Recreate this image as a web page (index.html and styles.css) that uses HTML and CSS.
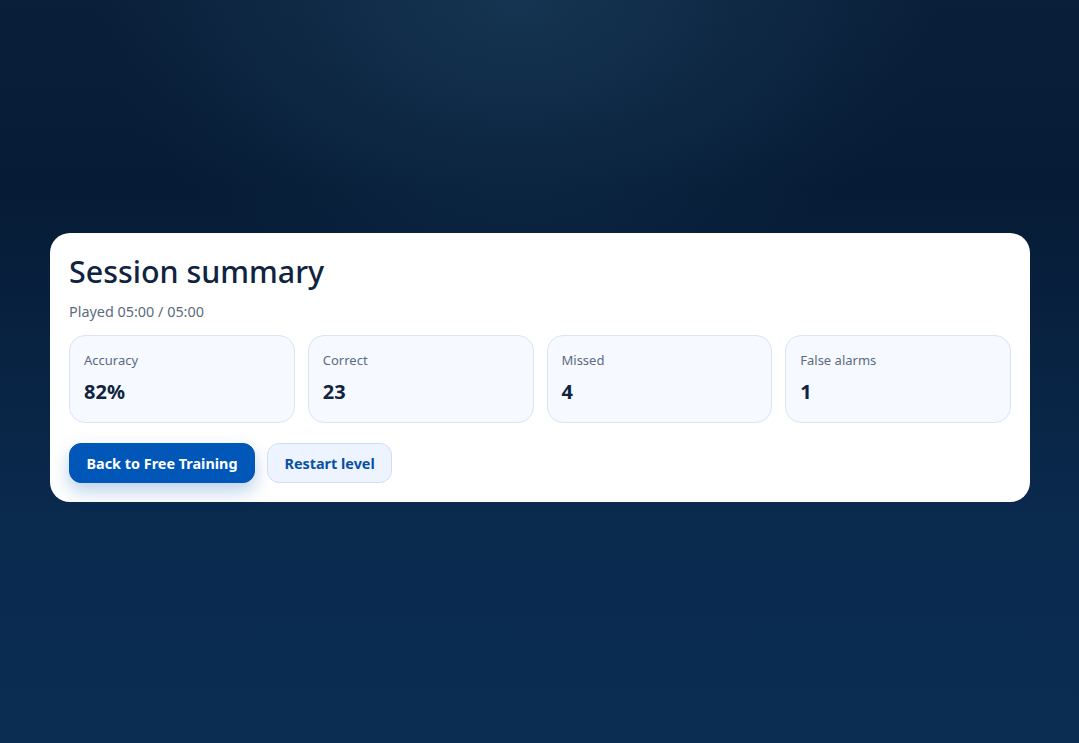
FILE: index.html
```html
<!DOCTYPE html>
<html lang="en">
<head>
<meta charset="utf-8">
<title>Session summary</title>
<link rel="stylesheet" href="styles.css">
</head>
<body>
<main class="stage">
  <section class="summary">
    <h1 class="title">Session summary</h1>
    <p class="played">Played 05:00 / 05:00</p>
    <div class="stats">
      <div class="stat"><div class="stat-label">Accuracy</div><div class="stat-value">82%</div></div>
      <div class="stat"><div class="stat-label">Correct</div><div class="stat-value">23</div></div>
      <div class="stat"><div class="stat-label">Missed</div><div class="stat-value">4</div></div>
      <div class="stat"><div class="stat-label">False alarms</div><div class="stat-value">1</div></div>
    </div>
    <div class="actions">
      <button class="btn btn-primary">Back to Free Training</button>
      <button class="btn btn-secondary">Restart level</button>
    </div>
  </section>
</main>
</body>
</html>
```

FILE: styles.css
```css
* { box-sizing: border-box; }
html, body { margin: 0; height: 100%; }
body {
  font-family: "Noto Sans", "Open Sans", sans-serif;
  background:
    radial-gradient(ellipse 420px 300px at 48% 0%, rgba(30, 70, 100, 0.55), rgba(30, 70, 100, 0) 100%),
    linear-gradient(180deg, #0a1f3a 0%, #061b35 25%, #0a2a4e 70%, #0b2d52 100%);
  color: #0f2440;
}
.stage {
  min-height: 100%;
  display: flex;
  align-items: center;
  justify-content: center;
  padding: 0 49px 8px 50px;
}
.summary {
  width: 980px;
  background: #fff;
  border-radius: 20px;
  padding: 19px 19px 19px;
}
.title {
  margin: 0;
  font-size: 30.4px;
  font-weight: 500;
  line-height: 40px;
  color: #0f2440;
}
.played {
  margin: 10px 0 0;
  font-size: 14.4px;
  line-height: 20px;
  color: #5b6b80;
}
.stats {
  margin-top: 13px;
  display: grid;
  grid-template-columns: repeat(4, 1fr);
  gap: 13px;
}
.stat {
  height: 88px;
  background: #f6f9ff;
  border: 1px solid #d9e5f4;
  border-radius: 16px;
  padding: 14px 14px;
}
.stat-label {
  font-size: 13px;
  line-height: 20px;
  color: #5b6b80;
}
.stat-value {
  margin-top: 10px;
  font-size: 20px;
  font-weight: 700;
  line-height: 24px;
  color: #0f2440;
}
.actions {
  margin-top: 20px;
  display: flex;
  gap: 12px;
}
.btn {
  height: 40px;
  border-radius: 12px;
  font-family: inherit;
  font-size: 14.4px;
  font-weight: 700;
  padding: 0 16.5px;
  cursor: pointer;
}
.btn-primary {
  background: #0057b8;
  color: #fff;
  border: 1px solid #0057b8;
  box-shadow: 0 8px 18px rgba(0, 87, 184, 0.28);
}
.btn-secondary {
  background: #eef4ff;
  color: #0a4fa6;
  border: 1px solid #cfdff3;
}
```
